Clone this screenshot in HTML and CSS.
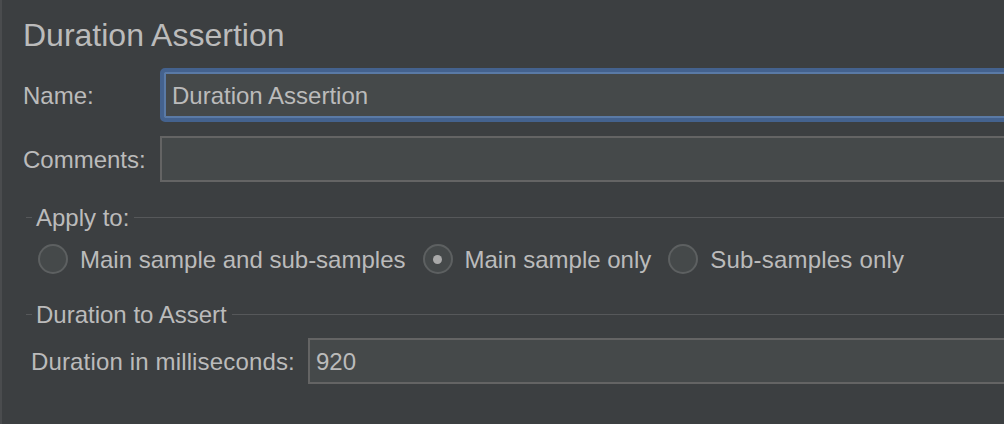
FILE: index.html
```html
<!DOCTYPE html>
<html>
<head>
<meta charset="utf-8">
<link rel="stylesheet" href="styles.css">
</head>
<body>
<div class="panel">
  <h1 class="title">Duration Assertion</h1>
  <div class="row name-row">
    <span class="label">Name:</span>
    <div class="field focused">Duration Assertion</div>
  </div>
  <div class="row comments-row">
    <span class="label">Comments:</span>
    <div class="field"></div>
  </div>
  <section class="group apply">
    <div class="legend"><span class="tick"></span><span class="legend-text">Apply to:</span><span class="rule"></span></div>
    <div class="radios">
      <div class="radio"><span class="circle"></span><span class="radio-text">Main sample and sub-samples</span></div>
      <div class="radio"><span class="circle checked"></span><span class="radio-text">Main sample only</span></div>
      <div class="radio"><span class="circle"></span><span class="radio-text wide">Sub-samples only</span></div>
    </div>
  </section>
  <section class="group duration">
    <div class="legend"><span class="tick"></span><span class="legend-text">Duration to Assert</span><span class="rule"></span></div>
    <div class="row dur-row">
      <span class="dur-label">Duration in milliseconds:</span>
      <div class="field dur-field">920</div>
    </div>
  </section>
</div>
</body>
</html>
```
FILE: styles.css
```css
html, body {
  margin: 0;
  padding: 0;
  background: #3c3f41;
  height: 100%;
  overflow: hidden;
}
body {
  font-family: "Liberation Sans", Arial, sans-serif;
  color: #bbbbbb;
}
.panel {
  border-left: 2px solid #4a4c4e;
  padding: 15px 0 0 21px;
  height: 100%;
  box-sizing: border-box;
}
.title {
  margin: 0;
  font-size: 32px;
  font-weight: normal;
  line-height: 40px;
  height: 40px;
  white-space: nowrap;
}
.row {
  display: flex;
  align-items: center;
  white-space: nowrap;
}
.label {
  font-size: 24px;
  width: 137px;
  flex: none;
  padding-top: 2px;
}
.field {
  flex: 1;
  box-sizing: border-box;
  background: #45494a;
  border: 2px solid #646464;
  height: 46px;
  font-size: 24px;
  line-height: 43px;
  padding-left: 6px;
  margin-right: -20px;
}
.name-row {
  margin-top: 13px;
}
.field.focused {
  height: 54px;
  border: 4px solid #44628e;
  border-radius: 5px;
  box-shadow: inset 0 0 0 2px #5a7aa6;
  line-height: 48px;
  padding-left: 8px;
}
.comments-row {
  margin-top: 14px;
}
.group {
  margin-left: 3px;
}
.apply {
  margin-top: 22px;
}
.legend {
  display: flex;
  align-items: flex-start;
  height: 28px;
  line-height: 28px;
  font-size: 24px;
  white-space: nowrap;
}
.tick {
  width: 6px;
  height: 1px;
  background: #56585a;
  margin-top: 13px;
  flex: none;
}
.legend-text {
  padding: 0 5px 0 4px;
}
.rule {
  flex: 1;
  height: 1px;
  background: #56585a;
  margin-top: 13px;
}
.radios {
  display: flex;
  align-items: center;
  gap: 17px;
  margin-top: 12px;
  padding-left: 12px;
  height: 30px;
}
.radio {
  display: flex;
  align-items: center;
  gap: 12px;
  font-size: 24px;
  white-space: nowrap;
}
.radio-text {
  padding-top: 2px;
}
.radio-text.wide {
  letter-spacing: 0.2px;
}
.circle {
  width: 30px;
  height: 30px;
  box-sizing: border-box;
  border-radius: 50%;
  border: 2px solid #5d6061;
  background: #45494a;
  display: flex;
  align-items: center;
  justify-content: center;
  flex: none;
}
.circle.checked::after {
  content: "";
  width: 9px;
  height: 9px;
  border-radius: 50%;
  background: #a9a9a9;
}
.duration {
  margin-top: 27px;
}
.dur-row {
  margin-top: 9px;
  padding-left: 5px;
}
.dur-label {
  font-size: 24px;
  width: 277px;
  flex: none;
  padding-top: 2px;
  letter-spacing: 0.15px;
}
.dur-field {
  padding-left: 6px;
}
```
